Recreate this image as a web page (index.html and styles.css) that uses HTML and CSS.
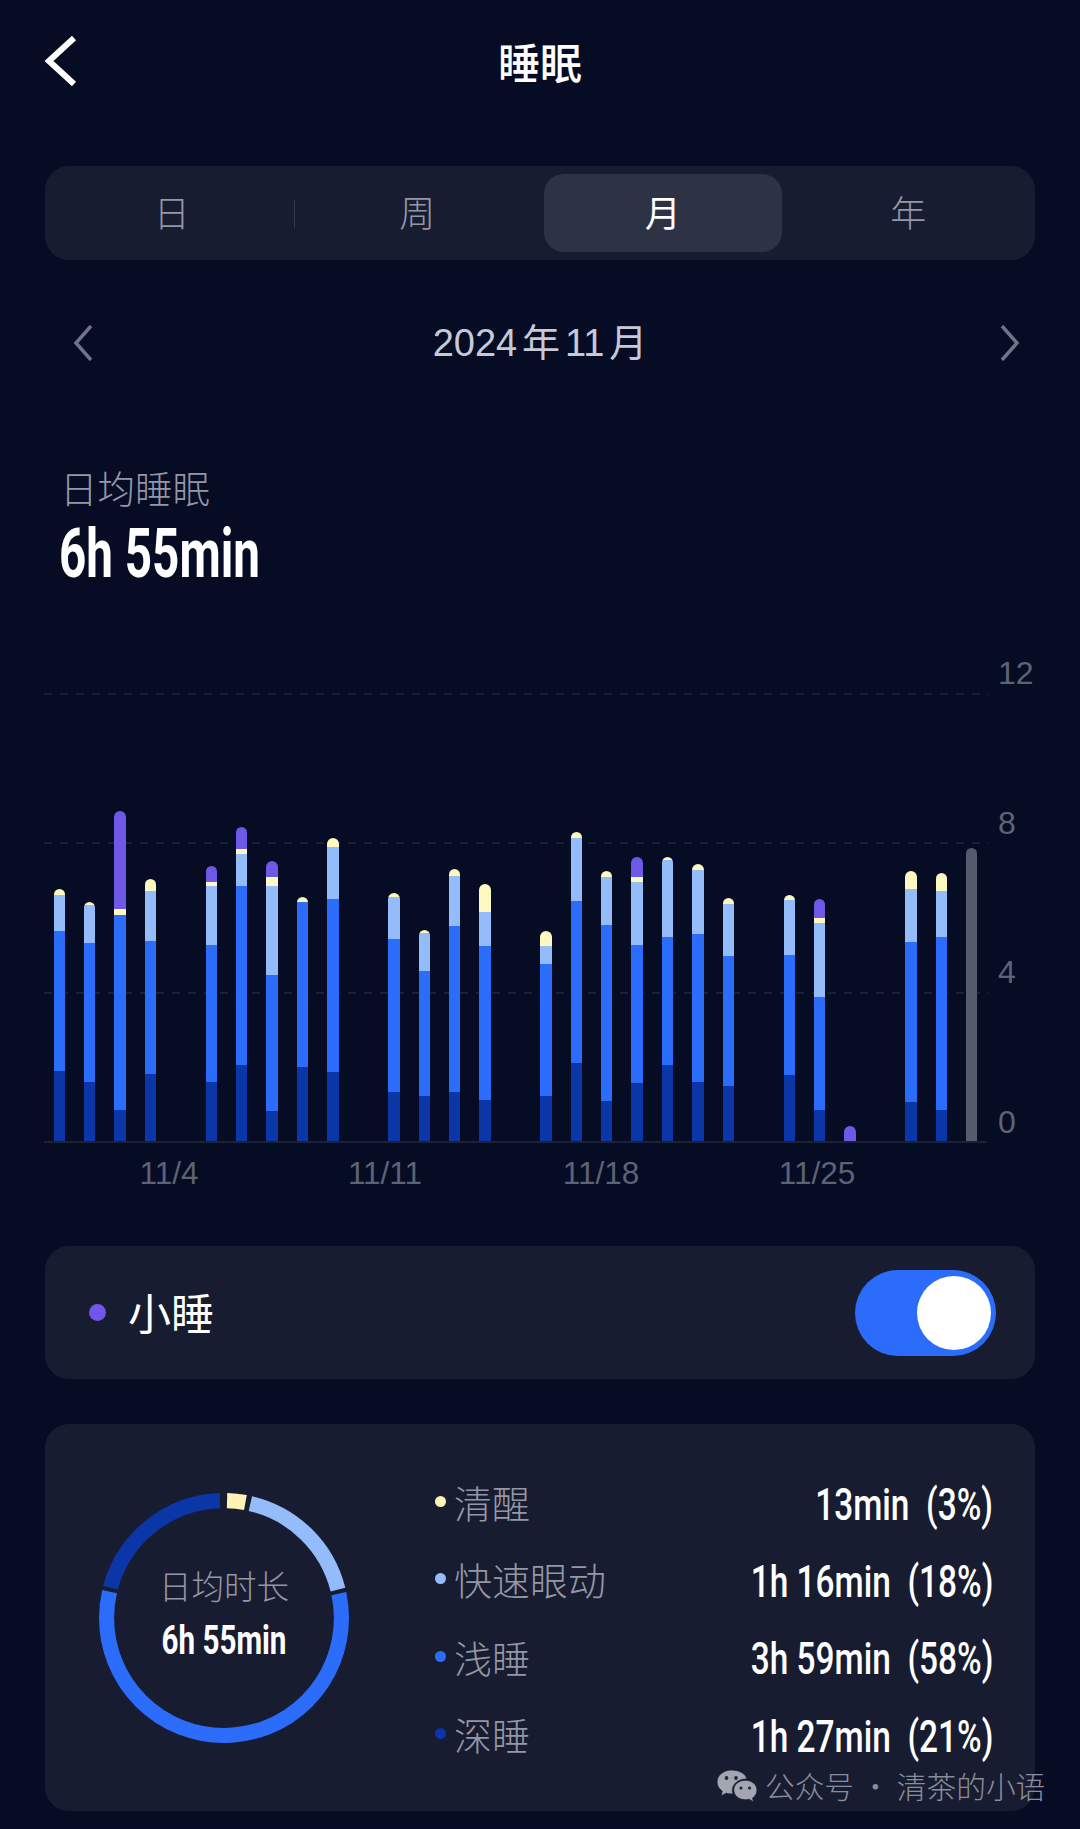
FILE: index.html
```html
<!DOCTYPE html>
<html lang="zh">
<head>
<meta charset="utf-8">
<title>睡眠</title>
<link rel="stylesheet" href="styles.css">
</head>
<body>
<main class="page">
  <header class="header">
    <svg class="back" viewBox="0 0 32 50" width="32" height="50"><polyline points="29,2 4,25 29,48" /></svg>
    <h1 class="title">睡眠</h1>
    <span></span>
  </header>

  <nav class="tabs">
    <div class="tab tab-sep">日</div>
    <div class="tab">周</div>
    <div class="tab tab-active">月</div>
    <div class="tab">年</div>
  </nav>

  <div class="date-row">
    <svg class="date-prev" viewBox="0 0 20 36" width="20" height="36"><polyline points="18,1 3,18 18,35" /></svg>
    <div class="date-text">2024 年 11 月</div>
    <svg class="date-next" viewBox="0 0 20 36" width="20" height="36"><polyline points="2,1 17,18 2,35" /></svg>
  </div>

  <section class="summary">
    <div class="summary-label">日均睡眠</div>
    <div class="summary-value">6h 55min</div>
  </section>

  <section class="chart">
    <div class="plot">
      <div class="gridline grid-12"></div>
      <div class="gridline grid-8"></div>
      <div class="gridline grid-4"></div>
      <div class="bars">
        <div class="bar"><i class="awake" style="height:5.9px"></i><i class="rem" style="height:36.2px"></i><i class="light" style="height:139.8px"></i><i class="deep" style="height:70.2px"></i></div>
        <div class="bar"><i class="awake" style="height:3.4px"></i><i class="rem" style="height:37.9px"></i><i class="light" style="height:138.8px"></i><i class="deep" style="height:59.2px"></i></div>
        <div class="bar"><i class="nap" style="height:98.5px"></i><i class="awake" style="height:5.5px"></i><i class="light" style="height:194.9px"></i><i class="deep" style="height:31.3px"></i></div>
        <div class="bar"><i class="awake" style="height:12.1px"></i><i class="rem" style="height:49.6px"></i><i class="light" style="height:132.9px"></i><i class="deep" style="height:67.5px"></i></div>
        <div class="bar"></div>
        <div class="bar"><i class="nap" style="height:15.8px"></i><i class="awake" style="height:3.8px"></i><i class="rem" style="height:59.2px"></i><i class="light" style="height:137px"></i><i class="deep" style="height:59.2px"></i></div>
        <div class="bar"><i class="nap" style="height:21.7px"></i><i class="awake" style="height:4.5px"></i><i class="rem" style="height:32px"></i><i class="light" style="height:179px"></i><i class="deep" style="height:76.4px"></i></div>
        <div class="bar"><i class="nap" style="height:16.2px"></i><i class="awake" style="height:8.6px"></i><i class="rem" style="height:89.5px"></i><i class="light" style="height:135.7px"></i><i class="deep" style="height:30.3px"></i></div>
        <div class="bar"><i class="awake" style="height:4.5px"></i><i class="light" style="height:165.6px"></i><i class="deep" style="height:73.7px"></i></div>
        <div class="bar"><i class="awake" style="height:9px"></i><i class="rem" style="height:52.7px"></i><i class="light" style="height:172.5px"></i><i class="deep" style="height:69.2px"></i></div>
        <div class="bar"></div>
        <div class="bar"><i class="awake" style="height:3.8px"></i><i class="rem" style="height:42px"></i><i class="light" style="height:153.2px"></i><i class="deep" style="height:48.9px"></i></div>
        <div class="bar"><i class="awake" style="height:3.4px"></i><i class="rem" style="height:38.2px"></i><i class="light" style="height:124.7px"></i><i class="deep" style="height:45.1px"></i></div>
        <div class="bar"><i class="awake" style="height:6.2px"></i><i class="rem" style="height:50.3px"></i><i class="light" style="height:166.3px"></i><i class="deep" style="height:48.9px"></i></div>
        <div class="bar"><i class="awake" style="height:28.9px"></i><i class="rem" style="height:33.7px"></i><i class="light" style="height:153.6px"></i><i class="deep" style="height:41.3px"></i></div>
        <div class="bar"></div>
        <div class="bar"><i class="awake" style="height:14.5px"></i><i class="rem" style="height:18.3px"></i><i class="light" style="height:131.9px"></i><i class="deep" style="height:45.1px"></i></div>
        <div class="bar"><i class="awake" style="height:6.2px"></i><i class="rem" style="height:63px"></i><i class="light" style="height:161.5px"></i><i class="deep" style="height:78.5px"></i></div>
        <div class="bar"><i class="awake" style="height:6.5px"></i><i class="rem" style="height:47.5px"></i><i class="light" style="height:176px"></i><i class="deep" style="height:40.3px"></i></div>
        <div class="bar"><i class="nap" style="height:20.3px"></i><i class="awake" style="height:5.2px"></i><i class="rem" style="height:62.7px"></i><i class="light" style="height:138.1px"></i><i class="deep" style="height:58.2px"></i></div>
        <div class="bar"><i class="awake" style="height:3.1px"></i><i class="rem" style="height:77.5px"></i><i class="light" style="height:127.4px"></i><i class="deep" style="height:76.4px"></i></div>
        <div class="bar"><i class="awake" style="height:6.2px"></i><i class="rem" style="height:63.7px"></i><i class="light" style="height:148.1px"></i><i class="deep" style="height:59.2px"></i></div>
        <div class="bar"><i class="awake" style="height:6.2px"></i><i class="rem" style="height:52.3px"></i><i class="light" style="height:129.5px"></i><i class="deep" style="height:55.1px"></i></div>
        <div class="bar"></div>
        <div class="bar"><i class="awake" style="height:4.8px"></i><i class="rem" style="height:54.8px"></i><i class="light" style="height:119.5px"></i><i class="deep" style="height:66.5px"></i></div>
        <div class="bar"><i class="nap" style="height:18.6px"></i><i class="awake" style="height:5.9px"></i><i class="rem" style="height:74px"></i><i class="light" style="height:112.3px"></i><i class="deep" style="height:31.3px"></i></div>
        <div class="bar"><i class="nap" style="height:14.8px"></i></div>
        <div class="bar"></div>
        <div class="bar"><i class="awake" style="height:17.9px"></i><i class="rem" style="height:52.7px"></i><i class="light" style="height:160.1px"></i><i class="deep" style="height:38.9px"></i></div>
        <div class="bar"><i class="awake" style="height:18.6px"></i><i class="rem" style="height:46.1px"></i><i class="light" style="height:172.5px"></i><i class="deep" style="height:31.3px"></i></div>
        <div class="bar"><i class="today" style="height:293.4px"></i></div>
      </div>
    </div>
    <div class="y-axis">
      <span>12</span><span>8</span><span>4</span><span>0</span>
    </div>
  </section>

  <div class="x-axis">
    <span>11/4</span><span>11/11</span><span>11/18</span><span>11/25</span>
  </div>

  <section class="card nap-card">
    <span class="nap-dot"></span>
    <span class="nap-label">小睡</span>
    <span class="switch"><span class="knob"></span></span>
  </section>

  <section class="card detail-card">
    <div class="ring">
      <svg viewBox="0 0 248 248" width="250" height="250">
        <g class="ring-arcs">
          <circle class="arc-awake" cx="124" cy="124" r="116.5" pathLength="360" stroke-dasharray="9 351" stroke-dashoffset="-1.5"/>
          <circle class="arc-rem" cx="124" cy="124" r="116.5" pathLength="360" stroke-dasharray="63 297" stroke-dashoffset="-13"/>
          <circle class="arc-light" cx="124" cy="124" r="116.5" pathLength="360" stroke-dasharray="205 155" stroke-dashoffset="-78"/>
          <circle class="arc-deep" cx="124" cy="124" r="116.5" pathLength="360" stroke-dasharray="73 287" stroke-dashoffset="-285"/>
        </g>
      </svg>
      <div class="ring-text">
        <div class="ring-label">日均时长</div>
        <div class="ring-value">6h 55min</div>
      </div>
    </div>
    <ul class="legend">
      <li class="legend-row"><span class="legend-dot dot-awake"></span><span class="legend-name">清醒</span><span class="legend-value">13min&nbsp; (3%)</span></li>
      <li class="legend-row"><span class="legend-dot dot-rem"></span><span class="legend-name">快速眼动</span><span class="legend-value">1h 16min&nbsp; (18%)</span></li>
      <li class="legend-row"><span class="legend-dot dot-light"></span><span class="legend-name">浅睡</span><span class="legend-value">3h 59min&nbsp; (58%)</span></li>
      <li class="legend-row"><span class="legend-dot dot-deep"></span><span class="legend-name">深睡</span><span class="legend-value">1h 27min&nbsp; (21%)</span></li>
    </ul>
  </section>

  <div class="watermark">
    <svg viewBox="0 0 42 34" width="42" height="34">
      <path class="wm-bubble" d="M15.5 1C7.5 1 1 6.4 1 13c0 3.700 2 7 5.200 9.200L5 27l5.200-2.700c1.600.5 3.300.7 5.300.7.500 0 1 0 1.500-.1-.4-1.200-.6-2.400-.6-3.600 0-6.300 6-11.300 13.500-11.300h1C29.700 4.600 23.300 1 15.500 1z"/>
      <path class="wm-bubble" d="M41 21c0-5.500-5.300-9.800-11.700-9.800S17.700 15.500 17.700 21s5.200 9.800 11.600 9.800c1.400 0 2.700-.2 3.900-.6L37.600 33l-1-4c2.700-1.900 4.400-4.700 4.400-8z"/>
      <circle class="wm-eye" cx="10.500" cy="9" r="1.900"/><circle class="wm-eye" cx="20" cy="9" r="1.900"/>
      <circle class="wm-eye" cx="25" cy="19" r="1.600"/><circle class="wm-eye" cx="33.500" cy="19" r="1.600"/>
    </svg>
    <span>公众号 · 清茶的小语</span>
  </div>
</main>
</body>
</html>
```

FILE: styles.css
```css
* { box-sizing: border-box; }
html, body { margin: 0; padding: 0; background: #060c24; }
body { font-family: "Liberation Sans", "Noto Sans CJK SC", sans-serif; color: #fff; }

.page {
  position: relative;
  width: 1080px;
  height: 1829px;
  padding: 0 45px;
  overflow: hidden;
  background: #060c24;
}

.header {
  height: 124px;
  padding-bottom: 3px;
  display: grid;
  grid-template-columns: 1fr auto 1fr;
  align-items: center;
}
.back { fill: none; stroke: #fff; stroke-width: 6; }
.title {
  margin: 0;
  font-family: "Noto Sans CJK SC", sans-serif;
  font-size: 42px;
  font-weight: 500;
  line-height: 50px;
}

.tabs {
  margin-top: 42px;
  height: 94px;
  padding: 8px;
  display: grid;
  grid-template-columns: repeat(4, 1fr);
  gap: 8px;
  background: #181c30;
  border-radius: 24px;
}
.tab {
  position: relative;
  padding-bottom: 4px;
  display: flex;
  align-items: center;
  justify-content: center;
  font-family: "Noto Sans CJK SC", sans-serif;
  font-size: 36px;
  font-weight: 300;
  color: #9497a6;
  border-radius: 20px;
}
.tab-active { background: #2e3245; color: #fff; font-weight: 400; }
.tab-sep::after {
  content: "";
  position: absolute;
  right: -4px;
  top: 26px;
  width: 1px;
  height: 28px;
  background: #34384a;
}

.date-row {
  margin-top: 40px;
  height: 86px;
  display: grid;
  grid-template-columns: 1fr auto 1fr;
  align-items: center;
}
.date-row svg { fill: none; stroke: #70748a; stroke-width: 3.5; }
.date-prev { margin-left: 28px; justify-self: start; }
.date-next { margin-right: 15px; justify-self: end; }
.date-text {
  font-size: 38px;
  word-spacing: -5.700px;
  color: #c6c9d6;
  line-height: 50px;
}

.summary { margin-top: 76px; padding-left: 15px; }
.summary-label {
  font-family: "Noto Sans CJK SC", sans-serif;
  font-size: 37.500px;
  font-weight: 300;
  line-height: 50px;
  color: #9497a6;
}
.summary-value {
  margin-top: 2px;
  margin-left: -1px;
  font-family: Roboto, "Liberation Sans", sans-serif;
  font-size: 68px;
  font-weight: 700;
  line-height: 80px;
  white-space: nowrap;
  transform: scaleX(.7);
  transform-origin: left center;
}

.chart {
  margin-top: 61px;
  margin-left: -1px;
  display: flex;
  align-items: flex-start;
  gap: 11px;
}
.plot {
  position: relative;
  margin-top: 39px;
  width: 943px;
  height: 447px;
  flex: none;
}
.gridline {
  position: absolute;
  left: 0;
  right: -2px;
  height: 2px;
  background: repeating-linear-gradient(90deg, #1a1f33 0 8px, transparent 8px 16px);
}
.grid-12 { top: -1px; }
.grid-8 { top: 148px; }
.grid-4 { top: 298px; }
.bars {
  position: absolute;
  inset: 0;
  display: grid;
  grid-template-columns: repeat(31, 1fr);
  align-items: end;
  justify-items: center;
  border-bottom: 2px solid #1d2136;
  height: 449px;
}
.bar {
  width: 11.4px;
  display: flex;
  flex-direction: column;
  border-radius: 6px 6px 0 0;
  overflow: hidden;
}
.bar i { display: block; }
.nap { background: #6d59e6; }
.awake { background: #fdf8bf; }
.rem { background: #94bcfb; }
.light { background: #2c6cfb; }
.deep { background: #0b36a8; }
.today { background: #565a6d; }

.y-axis {
  height: 484.500px;
  display: flex;
  flex-direction: column;
  justify-content: space-between;
  font-size: 32px;
  line-height: 36px;
  color: #5e6274;
}

.x-axis {
  margin-top: 14px;
  padding-left: 16px;
  display: flex;
  font-size: 31.500px;
  line-height: 36px;
  color: #5e6274;
}
.x-axis span { width: 216px; text-align: center; flex: none; }

.card { background: #181c30; border-radius: 24px; }

.nap-card {
  margin-top: 55px;
  height: 133px;
  padding: 0 39px 0 44px;
  display: flex;
  align-items: center;
}
.nap-dot { width: 17px; height: 17px; border-radius: 50%; background: #7157e8; }
.nap-label {
  margin-left: 22px;
  padding-bottom: 4px;
  font-family: "Noto Sans CJK SC", sans-serif;
  font-size: 43px;
  font-weight: 400;
  color: #fff;
}
.switch {
  margin-left: auto;
  width: 141px;
  height: 86px;
  padding: 6px 5px;
  display: flex;
  justify-content: flex-end;
  background: #2c6cfb;
  border-radius: 43px;
}
.knob { width: 74px; height: 74px; border-radius: 50%; background: #fff; }

.detail-card {
  margin-top: 45px;
  height: 387px;
  padding: 40px 42px 0 55px;
  display: flex;
  align-items: flex-start;
}
.ring { position: relative; margin-top: 29px; width: 248px; height: 248px; flex: none; }
.ring svg { display: block; margin: 0 -1px; }
.ring-arcs { transform: rotate(-90deg); transform-origin: 124px 124px; }
.ring-arcs circle { fill: none; stroke-width: 15; }
.arc-awake { stroke: #fdf4b6; }
.arc-rem { stroke: #94bcfb; }
.arc-light { stroke: #2c6cfb; }
.arc-deep { stroke: #0b36a8; }
.ring-text {
  position: absolute;
  left: 0;
  right: 0;
  top: 68px;
  text-align: center;
}
.ring-label {
  font-family: "Noto Sans CJK SC", sans-serif;
  font-size: 32.500px;
  font-weight: 300;
  line-height: 48px;
  color: #9497a6;
}
.ring-value {
  margin-top: 8px;
  font-family: Roboto, "Liberation Sans", sans-serif;
  font-size: 40px;
  font-weight: 700;
  line-height: 48px;
  white-space: nowrap;
  transform: scaleX(.74);
}

.legend { flex: 1; margin: -1px 0 0 87px; padding: 0; list-style: none; }
.legend-row { height: 77.300px; display: flex; align-items: center; }
.legend-dot { width: 11px; height: 11px; border-radius: 50%; flex: none; }
.dot-awake { background: #fdf4b6; }
.dot-rem { background: #94bcfb; }
.dot-light { background: #2c6cfb; }
.dot-deep { background: #0b36a8; }
.legend-name {
  margin-left: 8px;
  font-family: "Noto Sans CJK SC", sans-serif;
  font-size: 38px;
  font-weight: 300;
  color: #9497a6;
}
.legend-value {
  margin-left: auto;
  padding-top: 6px;
  font-family: Roboto, "Liberation Sans", sans-serif;
  font-size: 44px;
  font-weight: 500;
  white-space: nowrap;
  transform: scaleX(.76);
  transform-origin: right center;
}

.watermark {
  position: absolute;
  left: 716px;
  top: 1769px;
  display: flex;
  align-items: center;
  gap: 7px;
  font-family: "Noto Sans CJK SC", sans-serif;
  font-size: 29.700px;
  font-weight: 300;
  line-height: 34px;
  color: #8a8d9b;
  white-space: nowrap;
}
.wm-bubble { fill: #a3a5b0; stroke: #181c30; stroke-width: .8; }
.wm-eye { fill: #23273a; }
```
